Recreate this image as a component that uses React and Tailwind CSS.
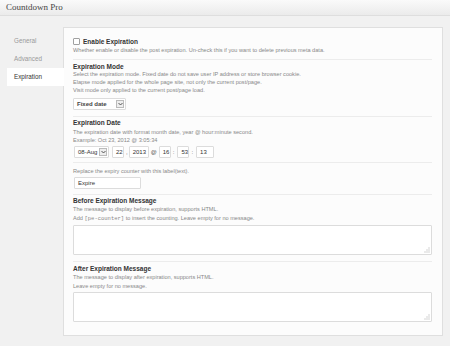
import { useState } from 'react';

const font = { fontFamily: '"Liberation Sans", Arial, sans-serif' };

function Heading({ children, className = 'leading-[8px]' }) {
  return <div className={`text-[6.5px] font-bold text-[#333] ${className}`}>{children}</div>;
}

function Desc({ children, className = 'leading-[8px]' }) {
  return <div className={`text-[5.6px] text-[#888] whitespace-nowrap ${className}`}>{children}</div>;
}

function Box({ children, w, className = '' }) {
  return (
    <div
      className={`h-[12px] ${w} shrink-0 border border-[#dcdcdc] bg-white rounded-[1px] flex items-center pl-[3px] pr-[1px] text-[6px] text-[#333] whitespace-nowrap ${className}`}
    >
      {children}
    </div>
  );
}

function DropButton() {
  return (
    <div className="w-[8px] h-[8px] shrink-0 border border-[#bbb] bg-[#eee] flex items-center justify-center ml-auto">
      <svg width="5" height="4" viewBox="0 0 5 4">
        <path d="M0.5 1 L2.5 3 L4.5 1" fill="none" stroke="#444" strokeWidth="0.9" />
      </svg>
    </div>
  );
}

function Grip() {
  const dots = [
    [6, 1],
    [6, 3],
    [4, 3],
    [6, 5],
    [4, 5],
    [2, 5],
  ];
  return (
    <svg className="absolute right-[2px] bottom-[2px]" width="7" height="6" viewBox="0 0 7 6">
      {dots.map(([x, y]) => (
        <rect key={`${x}-${y}`} x={x - 0.5} y={y - 0.5} width="1" height="1" fill="#aaa" />
      ))}
    </svg>
  );
}

function Area({ className }) {
  return (
    <div className={`relative ${className}`}>
      <textarea className="block w-full h-[30px] border border-[#dcdcdc] bg-white rounded-[1px] resize-none text-[6px] outline-none" />
      <Grip />
    </div>
  );
}

export default function App() {
  const [enabled, setEnabled] = useState(false);
  const nav = ['General', 'Advanced', 'Expiration'];

  return (
    <div className="w-[450px] h-[346px] bg-[#f1f1f1] overflow-hidden" style={font}>
      <div className="h-[16px] bg-gradient-to-b from-[#fafafa] to-[#ebebeb] border-b border-[#dedede] flex items-center pl-[6px]">
        <span className="text-[9px] text-[#464646]" style={{ fontFamily: '"Liberation Serif", Georgia, serif' }}>
          Countdown Pro
        </span>
      </div>

      <div className="flex pl-[7px] pt-[11px]">
        <nav className="w-[56px] pt-[5px] flex flex-col">
          {nav.map((n) => (
            <div
              key={n}
              className={`h-[18px] flex items-center pl-[7px] text-[6.3px] ${
                n === 'Expiration' ? 'bg-white text-[#333] -mr-px relative' : 'text-[#999]'
              }`}
            >
              {n}
            </div>
          ))}
        </nav>

        <main className="w-[380px] h-[309px] border border-[#dfdfdf] bg-[#fcfcfc] pl-[9px] pr-[10px] pt-[9px]">
          {/* Enable */}
          <div className="border-b border-[#ececec] pb-[5px]">
            <label className="flex items-center gap-[3px] h-[9px]">
              <input
                type="checkbox"
                checked={enabled}
                onChange={(e) => setEnabled(e.target.checked)}
                className="appearance-none w-[7px] h-[7px] border border-[#a0a0a0] bg-white rounded-[1px] m-0"
              />
              <Heading>Enable Expiration</Heading>
            </label>
            <Desc>Whether enable or disable the post expiration. Un-check this if you want to delete previous meta data.</Desc>
          </div>

          {/* Mode */}
          <div className="border-b border-[#ececec] pt-[3px] pb-[6px]">
            <Heading className="leading-[7px]">Expiration Mode</Heading>
            <Desc>Select the expiration mode. Fixed date do not save user IP address or store browser cookie.</Desc>
            <Desc>Elapse mode applied for the whole page site, not only the current post/page.</Desc>
            <Desc>Visit mode only applied to the current post/page load.</Desc>
            <div className="pt-[4px]">
              <Box w="w-[53px]">
                <span className="font-bold text-[#444]">Fixed date</span>
                <DropButton />
              </Box>
            </div>
          </div>

          {/* Date */}
          <div className="border-b border-[#ececec] pt-[2px] pb-[4px]">
            <Heading>Expiration Date</Heading>
            <Desc className="leading-[8px] mt-[1px]">The expiration date with format month date, year @ hour:minute second.</Desc>
            <Desc>Example: Oct 23, 2012 @ 3:05:34</Desc>
            <div className="flex items-center pt-[2px] text-[6px] text-[#555] whitespace-nowrap">
              <Box w="w-[35px]" className="ml-[1px]">
                08-Aug
                <DropButton />
              </Box>
              <Box w="w-[12px]" className="ml-[3px]">22</Box>
              <span className="ml-[2px]">,</span>
              <Box w="w-[20px]" className="ml-[1px]">2013</Box>
              <span className="ml-[2px]">@</span>
              <Box w="w-[12px]" className="ml-[2px]">16</Box>
              <span className="ml-[2px]">:</span>
              <Box w="w-[12px]" className="ml-[3px]">53</Box>
              <span className="ml-[2px]">:</span>
              <Box w="w-[18px]" className="ml-[3px]">13</Box>
            </div>
          </div>

          {/* Label */}
          <div className="border-b border-[#ececec] pt-[4px] pb-[5px]">
            <Desc>Replace the expiry counter with this label(text).</Desc>
            <div className="pt-[2px] pl-[1px]">
              <Box w="w-[67px]">Expire</Box>
            </div>
          </div>

          {/* Before */}
          <div className="border-b border-[#ececec] pt-[2px] pb-[6px]">
            <Heading>Before Expiration Message</Heading>
            <Desc className="leading-[9px]">The message to display before expiration, supports HTML.</Desc>
            <Desc className="leading-[9px]">
              Add{' '}
              <span className="text-[5.5px]" style={{ fontFamily: '"Liberation Mono", monospace' }}>
                [pe-counter]
              </span>{' '}
              to insert the counting. Leave empty for no message.
            </Desc>
            <Area className="mt-[2px]" />
          </div>

          {/* After */}
          <div className="pt-[3px]">
            <Heading>After Expiration Message</Heading>
            <Desc className="leading-[9px]">The message to display after expiration, supports HTML.</Desc>
            <Desc className="leading-[9px]">Leave empty for no message.</Desc>
            <Area className="mt-[1px]" />
          </div>
        </main>
      </div>
    </div>
  );
}
